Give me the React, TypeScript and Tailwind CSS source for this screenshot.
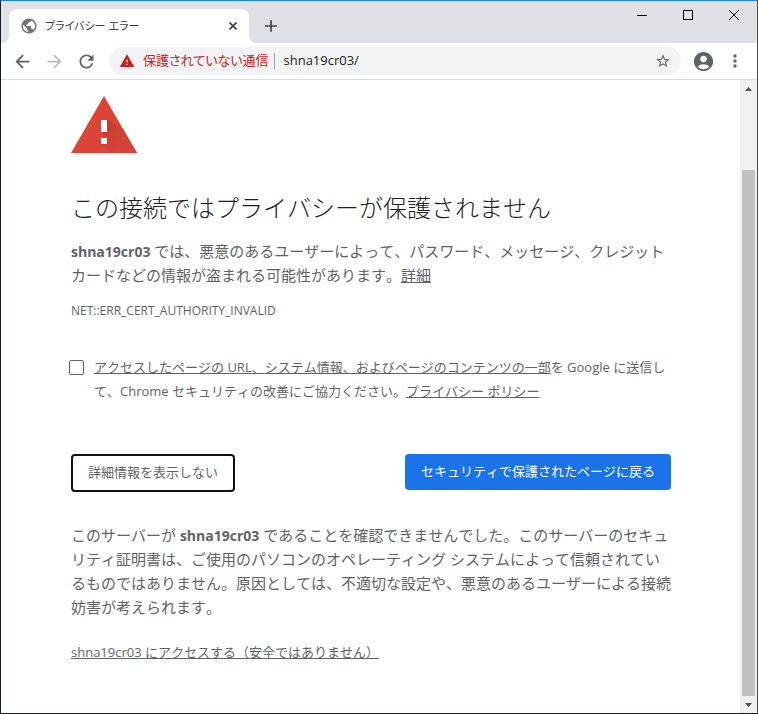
import type { ReactNode } from "react";
import {
  MdAccountCircle,
  MdAdd,
  MdArrowBack,
  MdArrowForward,
  MdMoreVert,
  MdPublic,
  MdRefresh,
  MdStarBorder,
  MdWarning,
} from "react-icons/md";

const HOST = "shna19cr03";

function IconButton({
  label,
  className = "",
  children,
}: {
  label: string;
  className?: string;
  children: ReactNode;
}) {
  return (
    <button
      type="button"
      aria-label={label}
      className={`flex shrink-0 items-center justify-center ${className}`}
    >
      {children}
    </button>
  );
}

function TabStrip() {
  return (
    <div className="flex h-[42px] items-end bg-[#dee1e6] pl-2">
      <div
        className="relative flex h-[34px] w-60 items-center rounded-t-lg bg-white pr-2 pl-[11px] before:absolute before:bottom-0 before:-left-2
          before:size-2 before:bg-[radial-gradient(circle_at_0_0,transparent_8px,white_8px)] after:absolute after:-right-2
          after:bottom-0 after:size-2 after:bg-[radial-gradient(circle_at_100%_0,transparent_8px,white_8px)]"
      >
        <MdPublic size={18} className="shrink-0 text-[#757575]" />
        <span className="ml-[7px] flex-1 text-[11px] text-[#3c4043] [font-feature-settings:'palt']">
          プライバシー エラー
        </span>
        <IconButton label="タブを閉じる" className="size-4">
          <svg width="8" height="8">
            <path d="M.5.5l7 7M7.5.5l-7 7" stroke="#3c4043" strokeWidth="1.6" />
          </svg>
        </IconButton>
      </div>
      <IconButton label="新しいタブ" className="ml-2 h-[34px] w-7 text-[#3c4043]">
        <MdAdd size={20} />
      </IconButton>
      <div className="ml-auto flex self-start">
        <IconButton label="最小化" className="h-7 w-[46px]">
          <svg width="10" height="10" shapeRendering="crispEdges">
            <path d="M0 5.5h10" stroke="#000" />
          </svg>
        </IconButton>
        <IconButton label="最大化" className="h-7 w-[46px]">
          <svg width="10" height="10" shapeRendering="crispEdges">
            <path d="M.5.5h9v9h-9z" fill="none" stroke="#000" />
          </svg>
        </IconButton>
        <IconButton label="閉じる" className="h-7 w-[46px]">
          <svg width="10" height="10">
            <path d="M0 0l10 10M10 0L0 10" stroke="#000" />
          </svg>
        </IconButton>
      </div>
    </div>
  );
}

function Toolbar() {
  return (
    <div className="flex h-[37px] items-center border-b border-[#dadce0] bg-white pl-[5px] text-[#5f6368]">
      <IconButton label="戻る" className="h-7 w-8">
        <MdArrowBack size={21} />
      </IconButton>
      <IconButton label="進む" className="h-7 w-8 text-[#babcbe]">
        <MdArrowForward size={21} />
      </IconButton>
      <IconButton label="再読み込み" className="h-7 w-8">
        <MdRefresh size={21} />
      </IconButton>
      <div className="ml-[7px] flex h-7 min-w-0 flex-1 items-center rounded-full bg-[#f1f3f4] px-2.5">
        <MdWarning size={16} className="shrink-0 text-[#c5221f]" />
        <span className="ml-2 shrink-0 text-[13px] text-[#c5221f] [font-feature-settings:'palt']">
          保護されていない通信
        </span>
        <span className="mr-2 ml-1.5 h-4 w-px bg-[#9aa0a6]" />
        <input
          type="text"
          aria-label="アドレスバー"
          defaultValue={`${HOST}/`}
          className="min-w-0 flex-1 bg-transparent text-[13px] text-[#202124] outline-none"
        />
        <IconButton label="ブックマークに追加" className="size-4">
          <MdStarBorder size={18} />
        </IconButton>
      </div>
      <IconButton label="プロフィール" className="ml-2 h-7 w-7">
        <MdAccountCircle size={23} />
      </IconButton>
      <IconButton label="メニュー" className="mr-2.5 ml-1.5 h-7 w-6">
        <MdMoreVert size={20} />
      </IconButton>
    </div>
  );
}

function Scrollbar() {
  return (
    <div aria-hidden="true" className="flex w-[17px] shrink-0 flex-col items-center bg-[#f1f1f1]">
      <svg width="17" height="17">
        <path d="M5 11l3.5-4 3.5 4z" fill="#505050" />
      </svg>
      <div className="flex-[73]" />
      <div className="w-[13px] flex-[525] bg-[#c1c1c1]" />
      <svg width="17" height="17">
        <path d="M5 7l3.5 4L12 7z" fill="#505050" />
      </svg>
    </div>
  );
}

function DangerIcon() {
  return (
    <svg width="66" height="57" viewBox="0 0 66 57" aria-hidden="true">
      <defs>
        <linearGradient id="shade" x1="30" y1="24" x2="56" y2="50" gradientUnits="userSpaceOnUse">
          <stop offset="0" stopColor="#b83a2f" />
          <stop offset="0.6" stopColor="#d24135" />
          <stop offset="1" stopColor="#d64236" />
        </linearGradient>
      </defs>
      <path d="M33 0l33 57H0z" fill="#db4437" />
      <path d="M36 24l16 9 14 24H40l-10-10h6v-6l-6-5h6z" fill="url(#shade)" />
      <path d="M30 24h6v12h-6zM30 42h6v6h-6z" fill="#fff" />
    </svg>
  );
}

export default function App() {
  return (
    <div
      className="flex min-h-screen flex-col border border-t-[#1883d7] border-r-[#4a4a4a] border-b-[#1b2028] border-l-[#141c2b]
        bg-white font-['Open_Sans','Noto_Sans_CJK_JP',sans-serif]"
    >
      <TabStrip />
      <Toolbar />
      <div className="flex flex-1">
        <main
          className="min-w-0 flex-1 pt-4 pr-[69px] pb-10 pl-[70px] text-[15px] leading-6 text-[#5f6368]
            [font-kerning:none]"
        >
          <DangerIcon />
          <h1 className="mt-10 text-2xl leading-[30px] font-light text-[#202124]">
            この接続ではプライバシーが保護されません
          </h1>
          <p className="mt-4">
            <strong className="text-sm leading-5">{HOST}</strong>{" "}
            では、悪意のあるユーザーによって、パスワード、メッセージ、クレジットカードなどの情報が盗まれる可能性があります。
            <a href="#details" className="underline">
              詳細
            </a>
          </p>
          <p className="mt-3 text-xs leading-6">NET::ERR_CERT_AUTHORITY_INVALID</p>

          <div className="mt-8 flex items-start text-[13px] leading-6">
            <input
              id="opt-in"
              type="checkbox"
              className="mt-[5px] -ml-0.5 size-[15px] shrink-0 appearance-none rounded-[2px] border border-[#5f6368] checked:bg-[#1a73e8]"
            />
            <label htmlFor="opt-in" className="ml-2.5">
              <a href="#reporting" className="underline">
                アクセスしたページの URL、システム情報、およびページのコンテンツの一部
              </a>
              を Google に送信して、Chrome セキュリティの改善にご協力ください。
              <a href="#privacy" className="underline">
                プライバシー ポリシー
              </a>
            </label>
          </div>

          <div className="mt-[51px] flex items-start justify-between text-[13px]">
            <button
              type="button"
              className="h-[38px] rounded-[4px] border-2 border-[#101010] bg-white px-[15px] pb-0.5"
            >
              詳細情報を表示しない
            </button>
            <button type="button" className="h-9 rounded-[4px] bg-[#1a73e8] px-4 pb-0.5 text-white">
              セキュリティで保護されたページに戻る
            </button>
          </div>

          <p id="details" className="mt-[31px]">
            このサーバーが <strong className="text-sm leading-5">{HOST}</strong>{" "}
            であることを確認できませんでした。このサーバーのセキュリティ証明書は、ご使用のパソコンのオペレーティング
            システムによって信頼されているものではありません。原因としては、不適切な設定や、悪意のあるユーザーによる接続妨害が考えられます。
          </p>
          <p className="mt-[21px] text-[13px] leading-6">
            <a href="#proceed" className="underline">
              {HOST} にアクセスする（安全ではありません）
            </a>
          </p>
        </main>
        <Scrollbar />
      </div>
    </div>
  );
}
